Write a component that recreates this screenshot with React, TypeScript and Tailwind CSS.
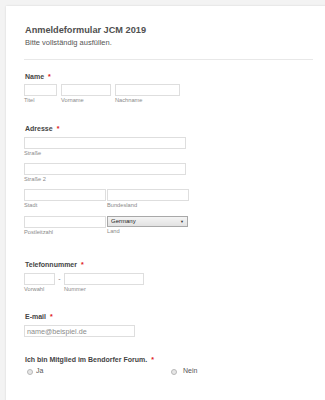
import React from "react";

const font = { fontFamily: '"Liberation Sans", Arial, sans-serif' };

const Req = () => <span className="text-[#e02020] ml-[4px]">*</span>;

const Label = ({ children }: { children: React.ReactNode }) => (
  <div className="text-[7px] font-bold text-[#444] leading-[9px] whitespace-nowrap">
    {children}
    <Req />
  </div>
);

const Sub = ({ children }: { children: React.ReactNode }) => (
  <span className="text-[5.7px] text-[#8a8a8a] leading-[7px] mt-[1px]">{children}</span>
);

const Field = ({ w, sub }: { w: string; sub?: string }) => (
  <div className="flex flex-col">
    <div className={`h-[12px] border border-[#dedede] bg-white ${w}`} />
    {sub && <Sub>{sub}</Sub>}
  </div>
);

const App: React.FC = () => {
  return (
    <div className="w-[325px] h-[400px] overflow-hidden bg-[#f3f3f3] pl-[6px] pt-[6px]" style={font}>
      <div className="bg-white w-[340px] h-[420px] shadow-[0_0_2px_rgba(0,0,0,0.12)] pl-[18px]">
        <div className="pt-[19px] pb-[12px] border-b border-[#e8e8e8] w-[289px] pl-[1px]">
          <h1 className="text-[9.2px] font-bold text-[#505050] leading-[10px]">Anmeldeformular JCM 2019</h1>
          <p className="text-[7.5px] text-[#555] leading-[9px] mt-[3px]">Bitte vollständig ausfüllen.</p>
        </div>

        <div className="mt-[12px]">
          <div className="pl-[1px]">
            <Label>Name</Label>
          </div>
          <div className="flex gap-[4px] mt-[3px]">
            <Field w="w-[33px]" sub="Titel" />
            <Field w="w-[50px]" sub="Vorname" />
            <Field w="w-[65px]" sub="Nachname" />
          </div>
        </div>

        <div className="mt-[20px]">
          <div className="pl-[1px]">
            <Label>Adresse</Label>
          </div>
          <div className="flex flex-col mt-[4px]">
            <Field w="w-[162px]" sub="Straße" />
            <div className="mt-[6px]">
              <Field w="w-[162px]" sub="Straße 2" />
            </div>
            <div className="flex gap-[1px] mt-[6px]">
              <Field w="w-[82px]" sub="Stadt" />
              <Field w="w-[82px]" sub="Bundesland" />
            </div>
            <div className="flex gap-[1px] mt-[7px]">
              <Field w="w-[82px]" sub="Postleitzahl" />
              <div className="flex flex-col">
                <div className="w-[81px] h-[11px] border border-[#a8a8a8] bg-[linear-gradient(#f4f4f4,#e2e2e2)] flex items-center justify-between pl-[3px] pr-[3px]">
                  <span className="text-[6px] text-[#222] leading-[9px]">Germany</span>
                  <span className="text-[4px] text-[#333]">▼</span>
                </div>
                <Sub>Land</Sub>
              </div>
            </div>
          </div>
        </div>

        <div className="mt-[24px]">
          <div className="pl-[1px]">
            <Label>Telefonnummer</Label>
          </div>
          <div className="flex mt-[4px]">
            <Field w="w-[31px]" sub="Vorwahl" />
            <span className="text-[7px] text-[#777] w-[9px] text-center leading-[12px]">-</span>
            <Field w="w-[80px]" sub="Nummer" />
          </div>
        </div>

        <div className="mt-[19px]">
          <div className="pl-[1px]">
            <Label>E-mail</Label>
          </div>
          <div className="mt-[4px] w-[111px] h-[12px] border border-[#dedede] flex items-center px-[2px]">
            <span className="text-[7.2px] text-[#8a8a8a] leading-[9px]">name@beispiel.de</span>
          </div>
        </div>

        <div className="mt-[18px]">
          <div className="pl-[1px]">
            <Label>Ich bin Mitglied im Bendorfer Forum.</Label>
          </div>
          <div className="flex mt-[3px] h-[9px] items-center">
            <div className="flex items-center w-[144px] pl-[3px]">
              <span className="w-[6px] h-[6px] rounded-full border border-[#b8b8b8] bg-[#e6e6e6]" />
              <span className="text-[7px] text-[#555] ml-[3px]">Ja</span>
            </div>
            <div className="flex items-center pl-[3px]">
              <span className="w-[6px] h-[6px] rounded-full border border-[#b8b8b8] bg-[#e6e6e6]" />
              <span className="text-[7px] text-[#555] ml-[6px]">Nein</span>
            </div>
          </div>
        </div>

        <div className="mt-[22px] pl-[1px]">
          <Label>Ich bin mit der Weitergabe meiner Adresse an andere Teilnehmer einverstanden.</Label>
        </div>
      </div>
    </div>
  );
};

export default App;
